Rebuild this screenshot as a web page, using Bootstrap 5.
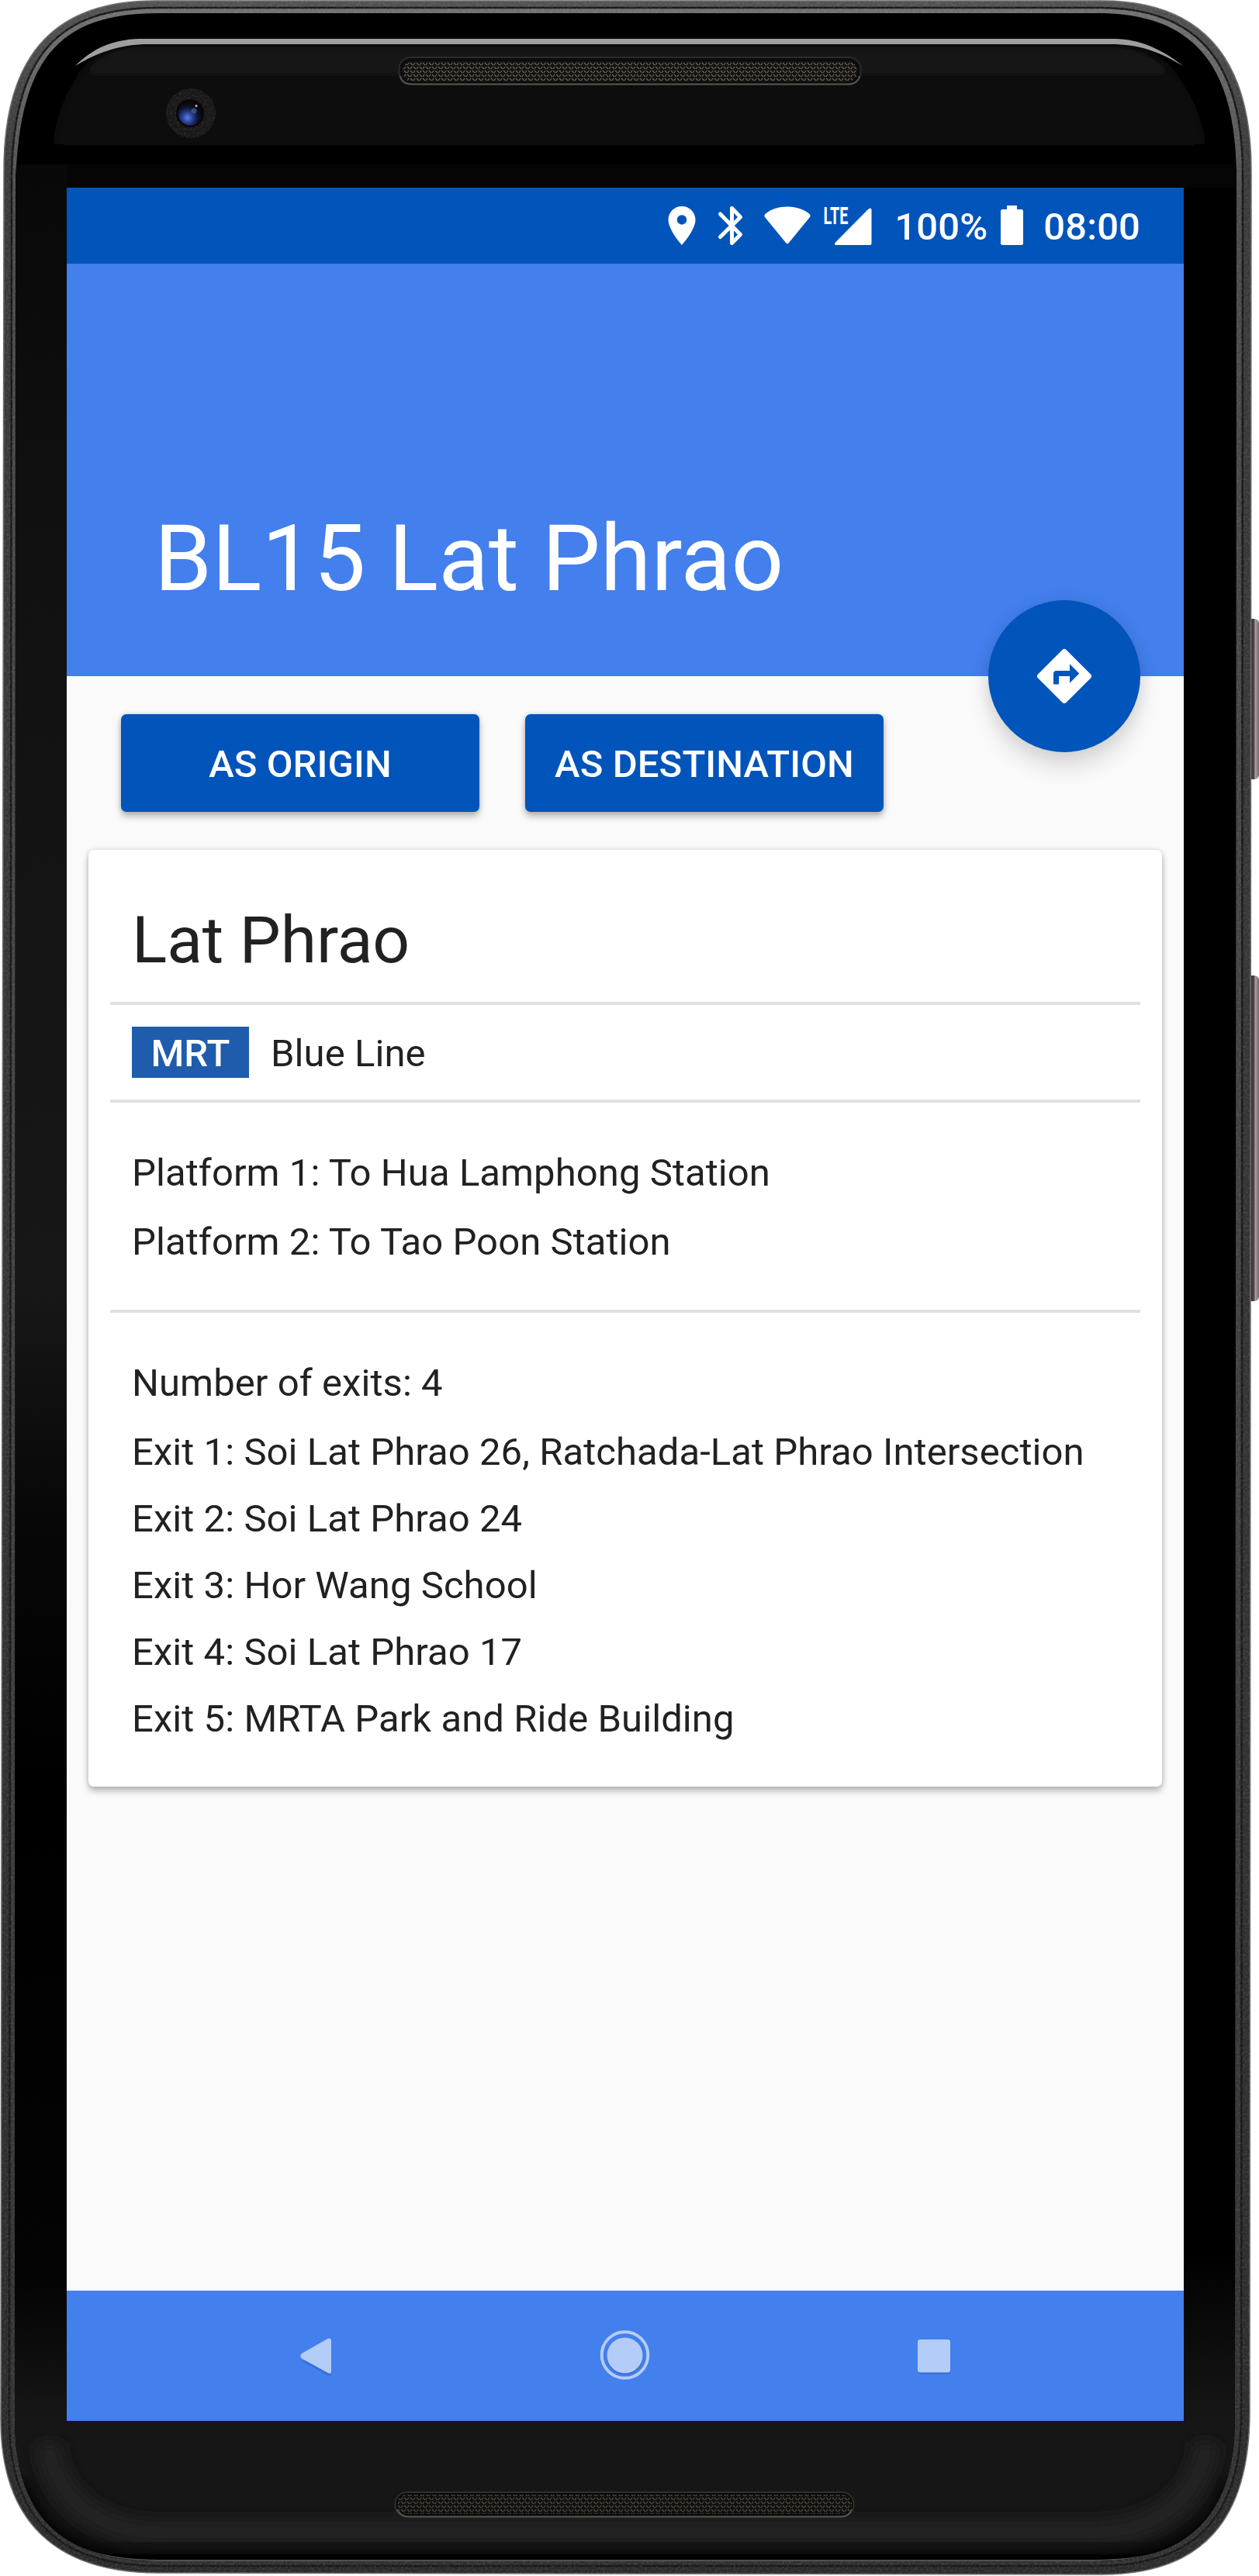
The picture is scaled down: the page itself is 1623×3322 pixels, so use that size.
<!DOCTYPE html>
<html lang="en">
<head>
<meta charset="utf-8">
<meta name="viewport" content="width=device-width, initial-scale=1">
<title>BL15 Lat Phrao</title>
<link href="https://cdn.jsdelivr.net/npm/bootstrap@5.3.0/dist/css/bootstrap.min.css" rel="stylesheet">
<style>
  body { font-family: Roboto, "Noto Sans", sans-serif; font-size: 49px; color: #212121; background: #fff; letter-spacing: .07px; }
  .device { width: 1623px; height: 3322px; padding: 242px 97px 200px 86px; }
  .hardware { top: 0; left: 0; z-index: 0; }
  .screen { width: 1440px; height: 2880px; background: #fafafa; z-index: 1; }
  .status-bar { height: 98px; padding-right: 56px; background: #0054ba; color: #fff; font-weight: 500; }
  .status-bar span { line-height: 94px; padding-top: 4px; }
  .battery { margin: 0 26px 0 16px; }
  .app-header { height: 532px; padding: 0 113px 81px; background: #437fed; color: #fff; }
  .app-header h1 { font-size: 119px; font-weight: 400; line-height: 140px; letter-spacing: .1px; }
  .fab { right: 56px; bottom: -98px; width: 196px; height: 196px; background: #0054ba; z-index: 2;
         box-shadow: 0 20px 28px rgba(0,0,0,.12), 0 0 20px rgba(0,0,0,.09); }
  .action-row { padding: 49px 70px; gap: 59px; }
  .btn-station { --bs-btn-color: #fff; --bs-btn-bg: #0054ba; --bs-btn-font-weight: 500;
         width: 462px; height: 126px; padding: 3px 0 0; border: 0; border-radius: 7px; font-size: 49px; line-height: 123px; letter-spacing: .1px;
         box-shadow: 0 6px 9px rgba(0,0,0,.25), 0 0 6px rgba(0,0,0,.16); }
  .station-card { margin: 0 28px; padding: 0 28px; height: 1208px; border: 0; border-radius: 7px; background: #fff; color: #212121;
         box-shadow: 0 6px 8px rgba(0,0,0,.24), 0 0 7px rgba(0,0,0,.14); }
  .section { padding: 0 28px; border-bottom: 4px solid #e0e0e0; }
  .section:last-child { border-bottom: 0; }
  .section-title { height: 200px; padding-top: 62px; }
  .section-title h2 { font-size: 84px; font-weight: 400; line-height: 110px; letter-spacing: -.1px; }
  .section-line { height: 126px; gap: 28px; }
  .line-tag { width: 151px; height: 66px; background: #1f5cac; color: #fff; font-weight: 500; line-height: 70px; }
  .line-name { line-height: 66px; padding-top: 3px; }
  .section-platforms { height: 271px; padding-top: 46px; line-height: 89px; }
  .section-exits { padding-top: 45px; line-height: 86px; }
  .exit-count { line-height: 92px; }
  .nav-keys { height: 168px; background: #437fed; }
  svg { display: block; flex: none; }
</style>
</head>
<body>
<div class="device position-relative overflow-hidden">
  <svg class="hardware position-absolute" width="1623" height="3322" viewBox="0 0 1623 3322" aria-hidden="true">
    <defs>
      <linearGradient id="rim" x2="0" y2="1"><stop offset="0" stop-color="#505250"/><stop offset=".06" stop-color="#3a3a3a"/><stop offset=".5" stop-color="#333"/><stop offset="1" stop-color="#2a2a2a"/></linearGradient>
      <linearGradient id="rimInner" x2="0" y2="1"><stop offset="0" stop-color="#707070"/><stop offset=".08" stop-color="#4a4a4a"/><stop offset=".5" stop-color="#404040"/><stop offset="1" stop-color="#303030"/></linearGradient>
      <linearGradient id="side" gradientUnits="userSpaceOnUse" x1="0" y1="212" x2="0" y2="3122">
        <stop offset="0" stop-color="#080808"/><stop offset=".17" stop-color="#111"/><stop offset=".5" stop-color="#171717"/><stop offset=".6" stop-color="#070707"/><stop offset=".72" stop-color="#000"/><stop offset=".94" stop-color="#040404"/><stop offset="1" stop-color="#161616"/></linearGradient>
      <linearGradient id="sideR" gradientUnits="userSpaceOnUse" x1="0" y1="2900" x2="0" y2="3122"><stop offset="0" stop-color="#000"/><stop offset="1" stop-color="#161616"/></linearGradient>
      <linearGradient id="glass" gradientUnits="userSpaceOnUse" x1="0" y1="57" x2="0" y2="212"><stop offset="0" stop-color="#151515"/><stop offset=".5" stop-color="#0e0e0e"/><stop offset="1" stop-color="#030303"/></linearGradient>
      <linearGradient id="key"><stop offset="0" stop-color="#252223"/><stop offset=".55" stop-color="#4a4345"/><stop offset=".7" stop-color="#a89fa1"/><stop offset="1" stop-color="#6e6668"/></linearGradient>
      <radialGradient id="lens" cx=".38" cy=".68" r=".6"><stop offset="0" stop-color="#5c80dc"/><stop offset=".35" stop-color="#2c3f96"/><stop offset=".7" stop-color="#10132e"/><stop offset="1" stop-color="#08080d"/></radialGradient>
      <pattern id="mesh" width="8" height="10" patternUnits="userSpaceOnUse"><rect width="8" height="10" fill="#15130f"/><path d="M1 1l3 3M5 6l3 3M5 4l2-3M1 9l2-3" stroke="#69645b" stroke-width="1.300"/></pattern>
      <filter id="soft"><feGaussianBlur stdDeviation="9"/></filter>
      <filter id="softEdge"><feGaussianBlur stdDeviation="6"/></filter>
      <filter id="grain" x="0" y="0" width="1" height="1"><feTurbulence type="fractalNoise" baseFrequency=".35" numOctaves="2"/><feColorMatrix values="0 0 0 0 1  0 0 0 0 1  0 0 0 0 1  .9 0 0 0 -.35"/><feComposite in2="SourceGraphic" operator="in"/></filter>
      <clipPath id="face"><path d="M20 260C20 75 75 17 205 17H1415C1540 17 1594 85 1594 230L1592 3120C1592 3240 1535 3303 1410 3303H205C75 3303 19 3240 19 3120Z"/></clipPath>
      <clipPath id="top"><rect y="54" width="1623" height="158"/></clipPath>
    </defs>
    <!-- power and volume keys -->
    <rect x="1608" y="798" width="15" height="207" rx="6" fill="url(#key)"/>
    <rect x="1608" y="1258" width="15" height="420" rx="6" fill="url(#key)"/>
    <!-- metal frame -->
    <path d="M5 220C5 60 80 1 200 1H1420C1550 1 1613 75 1613 220L1611 3110C1611 3250 1550 3320 1420 3320L205 3318C70 3318 1 3250 1 3120Z" fill="url(#rim)" stroke="#6c6e6c" stroke-width="1.500"/>
    <path d="M15 235C15 68 78 10 203 10H1418C1545 10 1602 80 1602 225L1600 3115C1600 3244 1542 3309 1415 3309H205C72 3309 12 3244 12 3120Z" fill="url(#rimInner)" stroke="#181818" stroke-width="2.500"/>
    <path d="M5 220C5 60 80 1 200 1H1420C1550 1 1613 75 1613 220L1611 3110C1611 3250 1550 3320 1420 3320L205 3318C70 3318 1 3250 1 3120Z" fill="#fff" filter="url(#grain)" opacity=".25"/>
    <g clip-path="url(#face)">
      <rect width="1623" height="3322" fill="#000"/>
      <g clip-path="url(#top)"><path d="M64 230C66 130 105 57 185 57H1430C1510 57 1556 130 1560 230Z" fill="url(#glass)" filter="url(#softEdge)"/></g>
      <rect y="212" width="1623" height="30" fill="#050505"/>
      <rect y="212" width="86" height="2912" fill="url(#side)"/>
      <rect x="1526" y="2900" width="80" height="224" fill="url(#sideR)"/>
      <rect y="3120" width="1623" height="202" fill="#161616"/>
      <path d="M62 3150C68 3215 120 3266 205 3266H1410C1495 3266 1550 3215 1555 3150" fill="none" stroke="#242424" stroke-width="34" filter="url(#soft)"/>
      <path d="M24 3200C40 3260 95 3304 205 3304H1410C1515 3304 1575 3260 1590 3200" fill="none" stroke="#000" stroke-width="22" filter="url(#soft)"/>
      <rect y="3294" width="1623" height="10" fill="#000"/>
      <path d="M62 3258C95 3290 140 3302 205 3302H1410C1475 3302 1520 3290 1552 3258" fill="none" stroke="#505050" stroke-width="2"/>
    </g>
    <path d="M97 85C120 62 145 51 180 50H1436C1470 50 1500 65 1525 85C1495 67 1470 57 1430 57H185C150 59 125 68 97 85Z" fill="#9e9e9e"/>
    <!-- earpiece -->
    <rect x="514.500" y="74" width="595" height="35" rx="15" fill="#0c0c0c" stroke="#2b2b2b" stroke-width="2"/>
    <path d="M516 98Q518 108 530 108.500H1094Q1106 108 1108 98" fill="none" stroke="#55524d" stroke-width="2"/>
    <rect x="519" y="79" width="586" height="26" rx="12" fill="url(#mesh)"/>
    <!-- front camera -->
    <circle cx="246" cy="146" r="32" fill="#191716"/>
    <circle cx="246" cy="146" r="32" fill="#fff" filter="url(#grain)" opacity=".22"/>
    <circle cx="245" cy="146" r="18" fill="#060608"/>
    <circle cx="245.500" cy="146" r="16" fill="url(#lens)"/>
    <circle cx="250" cy="143" r="3.500" fill="#435b80" opacity=".8"/>
    <circle cx="253" cy="136.500" r="1.500" fill="#dba9c8"/>
    <!-- bottom speaker -->
    <rect x="509.500" y="3214" width="591" height="31.500" rx="15" fill="#080808" stroke="#2f2f2d" stroke-width="2"/>
    <path d="M512 3236Q516 3245 526 3245.500H1084Q1095 3245 1098 3236" fill="none" stroke="#54534b" stroke-width="2"/>
    <rect x="512" y="3217" width="586" height="25" rx="12" fill="url(#mesh)" opacity=".75"/>
  </svg>

  <main class="screen position-relative d-flex flex-column">
    <div class="status-bar d-flex justify-content-end align-items-center">
      <svg width="304" height="60" viewBox="849 261 304 60" fill="#fff" aria-label="Location, Bluetooth, Wi-Fi, LTE">
        <path d="M879 266c-9.700 0-17.500 7.800-17.500 17.500 0 13.100 17.500 32.500 17.500 32.500s17.500-19.400 17.500-32.500c0-9.700-7.800-17.500-17.500-17.500zm0 23.700a6.250 6.250 0 1 1 0-12.500 6.250 6.250 0 0 1 0 12.500z"/>
        <path d="M928.500 276L954.500 302.500L943.500 313.500V268.500L954.500 280L928.500 305.500" fill="none" stroke="#fff" stroke-width="5" stroke-linecap="round" stroke-linejoin="round"/>
        <path d="M986 280Q984.500 277.500 987 275.500C1001 263.500 1029 263.500 1043 275.500Q1045.500 277.500 1044 280L1017 313Q1015 315.500 1013 313Z"/>
        <path d="M1119 270Q1123.500 266.500 1123.500 271V314Q1123.500 316 1121.500 316H1078Q1074.500 316 1077 312.500Z"/>
        <text x="1061.500" y="289" font-family="Roboto" font-weight="700" font-size="31" textLength="32" lengthAdjust="spacingAndGlyphs">LTE</text>
      </svg>
      <span>100%</span>
      <svg class="battery" width="30" height="60" viewBox="1288 261 30 60" fill="#fff"><path d="M1297 270V265H1310V270H1315.500Q1318 270 1318 272.500V313.500Q1318 316 1315.500 316H1291.500Q1289 316 1289 313.500V272.500Q1289 270 1291.500 270Z"/></svg>
      <span>08:00</span>
    </div>

    <header class="app-header position-relative d-flex align-items-end">
      <h1 class="m-0">BL15 Lat Phrao</h1>
      <button class="fab btn rounded-circle position-absolute d-flex align-items-center justify-content-center p-0 border-0" type="button" aria-label="Directions">
        <svg width="84" height="84" viewBox="0 0 24 24" fill="#fff"><path d="M21.710 11.290l-9-9a.996.996 0 0 0-1.410 0l-9 9a.996.996 0 0 0 0 1.410l9 9c.390.390 1.020.390 1.410 0l9-9a.996.996 0 0 0 0-1.410zM14 14.500V12h-4v3H8v-4c0-.550.450-1 1-1h5V7.500l3.500 3.500-3.500 3.500z"/></svg>
      </button>
    </header>

    <div class="action-row d-flex">
      <button class="btn btn-station" type="button">AS ORIGIN</button>
      <button class="btn btn-station" type="button">AS DESTINATION</button>
    </div>

    <article class="station-card card">
      <div class="section section-title"><h2 class="m-0">Lat Phrao</h2></div>
      <div class="section section-line d-flex align-items-center">
        <span class="line-tag text-center">MRT</span><span class="line-name">Blue Line</span>
      </div>
      <div class="section section-platforms">
        <div>Platform 1: To Hua Lamphong Station</div>
        <div>Platform 2: To Tao Poon Station</div>
      </div>
      <div class="section section-exits">
        <div class="exit-count">Number of exits: 4</div>
        <ul class="list-unstyled m-0">
          <li>Exit 1: Soi Lat Phrao 26, Ratchada-Lat Phrao Intersection</li>
          <li>Exit 2: Soi Lat Phrao 24</li>
          <li>Exit 3: Hor Wang School</li>
          <li>Exit 4: Soi Lat Phrao 17</li>
          <li>Exit 5: MRTA Park and Ride Building</li>
        </ul>
      </div>
    </article>

    <nav class="nav-keys mt-auto d-flex align-items-center justify-content-center" aria-label="System">
      <svg width="860" height="80" viewBox="376 2998 860 80" fill="#b4ccf8">
        <g fill="#2d63c4" opacity=".55"><path d="M388 3042L422 3061Q427 3063 427 3058V3048Z" transform="translate(0 2)"/><rect x="1183" y="3024" width="42" height="37.500" rx="3"/></g>
        <path d="M389 3035L421.500 3016.500Q427 3013.500 427 3019V3058Q427 3063 421.500 3059.500L389 3041.500Q385.500 3038.500 389 3035Z"/>
        <circle cx="805.500" cy="3037" r="29.800" fill="none" stroke="#b4ccf8" stroke-width="4"/>
        <circle cx="805.500" cy="3039" r="23.500" fill="#2d63c4" opacity=".5"/>
        <circle cx="805.500" cy="3037.500" r="23"/>
        <rect x="1183" y="3017" width="42" height="42.500" rx="3"/>
      </svg>
    </nav>
  </main>
</div>
<script src="https://cdn.jsdelivr.net/npm/bootstrap@5.3.0/dist/js/bootstrap.bundle.min.js"></script>
</body>
</html>
